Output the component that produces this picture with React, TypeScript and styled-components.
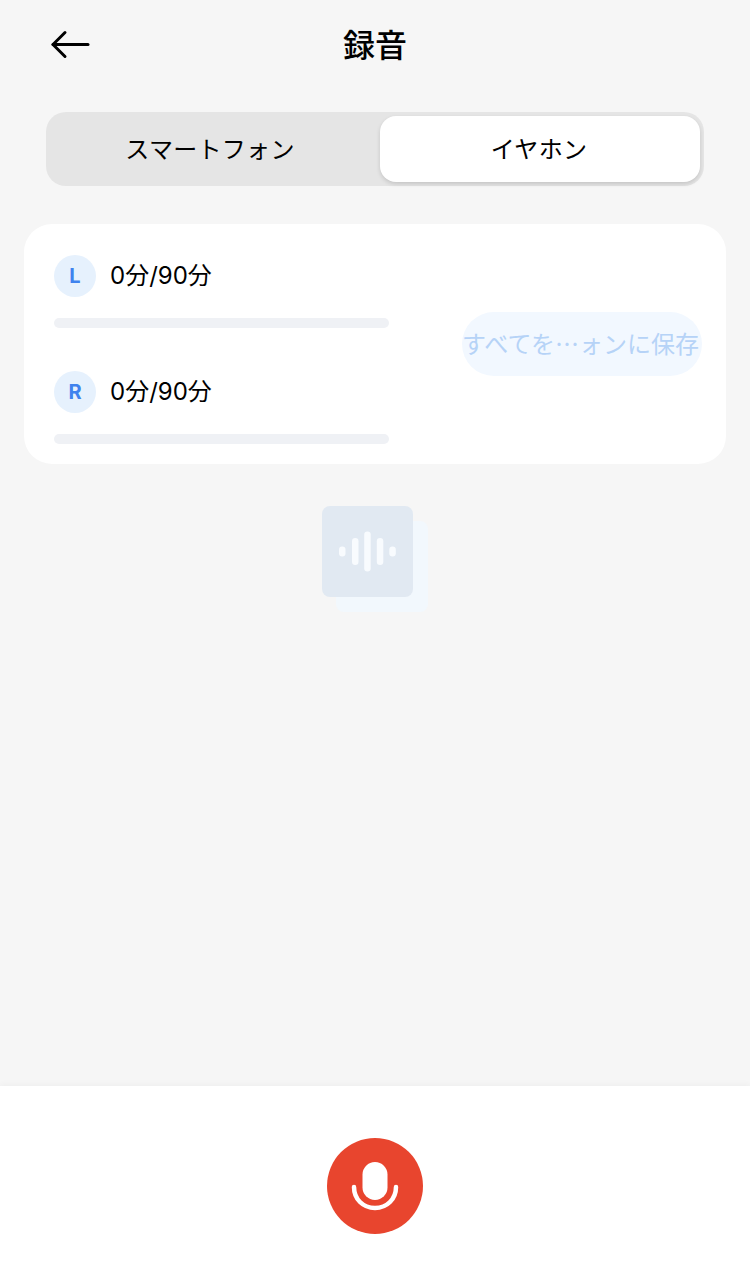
import React from "react";
import styled, { createGlobalStyle } from "styled-components";

const GlobalStyle = createGlobalStyle`
  html, body {
    margin: 0;
    padding: 0;
    background: #f6f6f6;
  }
  body {
    font-family: "Noto Sans CJK JP", "Noto Sans", sans-serif;
    color: #000;
  }
`;

const Page = styled.div`
  width: 750px;
  height: 1286px;
  display: flex;
  flex-direction: column;
  overflow: hidden;
`;

const Header = styled.header`
  height: 90px;
  flex: none;
  display: flex;
  justify-content: center;
  position: relative;
`;

const BackButton = styled.button`
  position: absolute;
  left: 50px;
  top: 28px;
  width: 40px;
  height: 32px;
  padding: 0;
  border: 0;
  background: none;
  display: flex;
`;

const Title = styled.h1`
  margin: 0;
  font-size: 32px;
  line-height: 87px;
  font-weight: 500;
`;

const Tabs = styled.div`
  flex: none;
  margin: 22px 46px 0;
  height: 74px;
  box-sizing: border-box;
  padding: 4px;
  border-radius: 20px;
  background: #e5e5e5;
  display: flex;
`;

const Tab = styled.div<{ $active?: boolean }>`
  flex: ${(p) => (p.$active ? "0 0 320px" : "1")};
  box-sizing: border-box;
  padding: ${(p) => (p.$active ? "0 2px 3px 0" : "0 10px 3px 0")};
  display: flex;
  align-items: center;
  justify-content: center;
  font-size: 24px;
  line-height: 32px;
  font-weight: 400;
  letter-spacing: 0.3px;
  border-radius: 16px;
  background: ${(p) => (p.$active ? "#fff" : "transparent")};
  box-shadow: ${(p) => (p.$active ? "0 2px 4px rgba(0, 0, 0, 0.14)" : "none")};
`;

const Card = styled.section`
  flex: none;
  margin: 38px 24px 0;
  height: 240px;
  box-sizing: border-box;
  padding: 31px 24px 20px 30px;
  border-radius: 28px;
  background: #fff;
  display: flex;
  align-items: center;
  justify-content: space-between;
`;

const Channels = styled.div`
  width: 335px;
  align-self: stretch;
  display: flex;
  flex-direction: column;
  gap: 43px;
`;

const Channel = styled.div`
  display: flex;
  flex-direction: column;
  gap: 21px;
`;

const ChannelInfo = styled.div`
  display: flex;
  align-items: center;
  gap: 14px;
`;

const Badge = styled.span`
  width: 42px;
  height: 42px;
  border-radius: 50%;
  background: #e6f1fd;
  color: #3f82ee;
  display: flex;
  align-items: center;
  justify-content: center;
  font-family: Inter, "Noto Sans", sans-serif;
  font-size: 20px;
  font-weight: 700;
`;

const Usage = styled.span`
  font-family: Inter, "Noto Sans CJK JP", sans-serif;
  font-size: 24px;
  line-height: 32px;
  font-weight: 400;
  padding-bottom: 1px;
`;

const Track = styled.div`
  height: 10px;
  border-radius: 5px;
  background: #eff1f5;
`;

const SaveButton = styled.button`
  width: 240px;
  height: 64px;
  margin-bottom: 11px;
  padding: 0 3px 4px 0;
  border: 0;
  border-radius: 32px;
  background: #f2f8ff;
  color: #b6d3f7;
  font-family: inherit;
  font-size: 24px;
  font-weight: 400;
  white-space: nowrap;
  display: flex;
  align-items: center;
  justify-content: center;
`;

const Empty = styled.div`
  flex: 1;
  display: flex;
  justify-content: center;
  padding: 42px 0 0 3px;
`;

const Footer = styled.footer`
  flex: none;
  height: 200px;
  background: #fff;
  box-shadow: 0 -2px 6px rgba(0, 0, 0, 0.03);
  display: flex;
  justify-content: center;
  padding-top: 52px;
  box-sizing: border-box;
`;

const RecordButton = styled.button`
  width: 96px;
  height: 96px;
  padding: 0;
  border: 0;
  border-radius: 50%;
  background: #e8452e;
  display: flex;
  align-items: center;
  justify-content: center;
`;

const BackIcon = () => (
  <svg width="40" height="32" viewBox="0 0 40 32" fill="none" stroke="#000" strokeWidth="3" strokeLinecap="round" strokeLinejoin="round">
    <path d="M3 16.5H38" />
    <path d="M15 4.5L3 16.5L15 28.5" />
  </svg>
);

const WaveIllustration = () => (
  <svg width="110" height="110" viewBox="0 0 110 110">
    <rect x="14" y="15" width="92" height="91" rx="8" fill="#f2f8fd" />
    <rect x="0" y="0" width="91" height="91" rx="8" fill="#e1e9f2" />
    <g fill="#f8fbfe">
      <rect x="17" y="40.5" width="6.5" height="10" rx="3.25" />
      <rect x="30" y="32" width="6.5" height="27" rx="3.25" />
      <rect x="42.2" y="25.5" width="6.5" height="40" rx="3.25" />
      <rect x="54.8" y="32" width="6.5" height="27" rx="3.25" />
      <rect x="67.3" y="40.5" width="6.5" height="10" rx="3.25" />
    </g>
  </svg>
);

const MicIcon = () => (
  <svg width="48" height="52" viewBox="0 0 48 52" fill="none">
    <path d="M3 27C3 39 12 48 24 48C36 48 45 39 45 27" stroke="#fff" strokeWidth="4.5" strokeLinecap="round" />
    <rect x="11.5" y="2" width="25" height="38" rx="12.5" fill="#fff" />
  </svg>
);

const channels = ["L", "R"];

export default function App() {
  return (
    <Page>
      <GlobalStyle />
      <Header>
        <BackButton aria-label="戻る">
          <BackIcon />
        </BackButton>
        <Title>録音</Title>
      </Header>
      <Tabs>
        <Tab>スマートフォン</Tab>
        <Tab $active>イヤホン</Tab>
      </Tabs>
      <Card>
        <Channels>
          {channels.map((name) => (
            <Channel key={name}>
              <ChannelInfo>
                <Badge>{name}</Badge>
                <Usage>0分/90分</Usage>
              </ChannelInfo>
              <Track />
            </Channel>
          ))}
        </Channels>
        <SaveButton>すべてを…ォンに保存</SaveButton>
      </Card>
      <Empty>
        <WaveIllustration />
      </Empty>
      <Footer>
        <RecordButton aria-label="録音開始">
          <MicIcon />
        </RecordButton>
      </Footer>
    </Page>
  );
}
